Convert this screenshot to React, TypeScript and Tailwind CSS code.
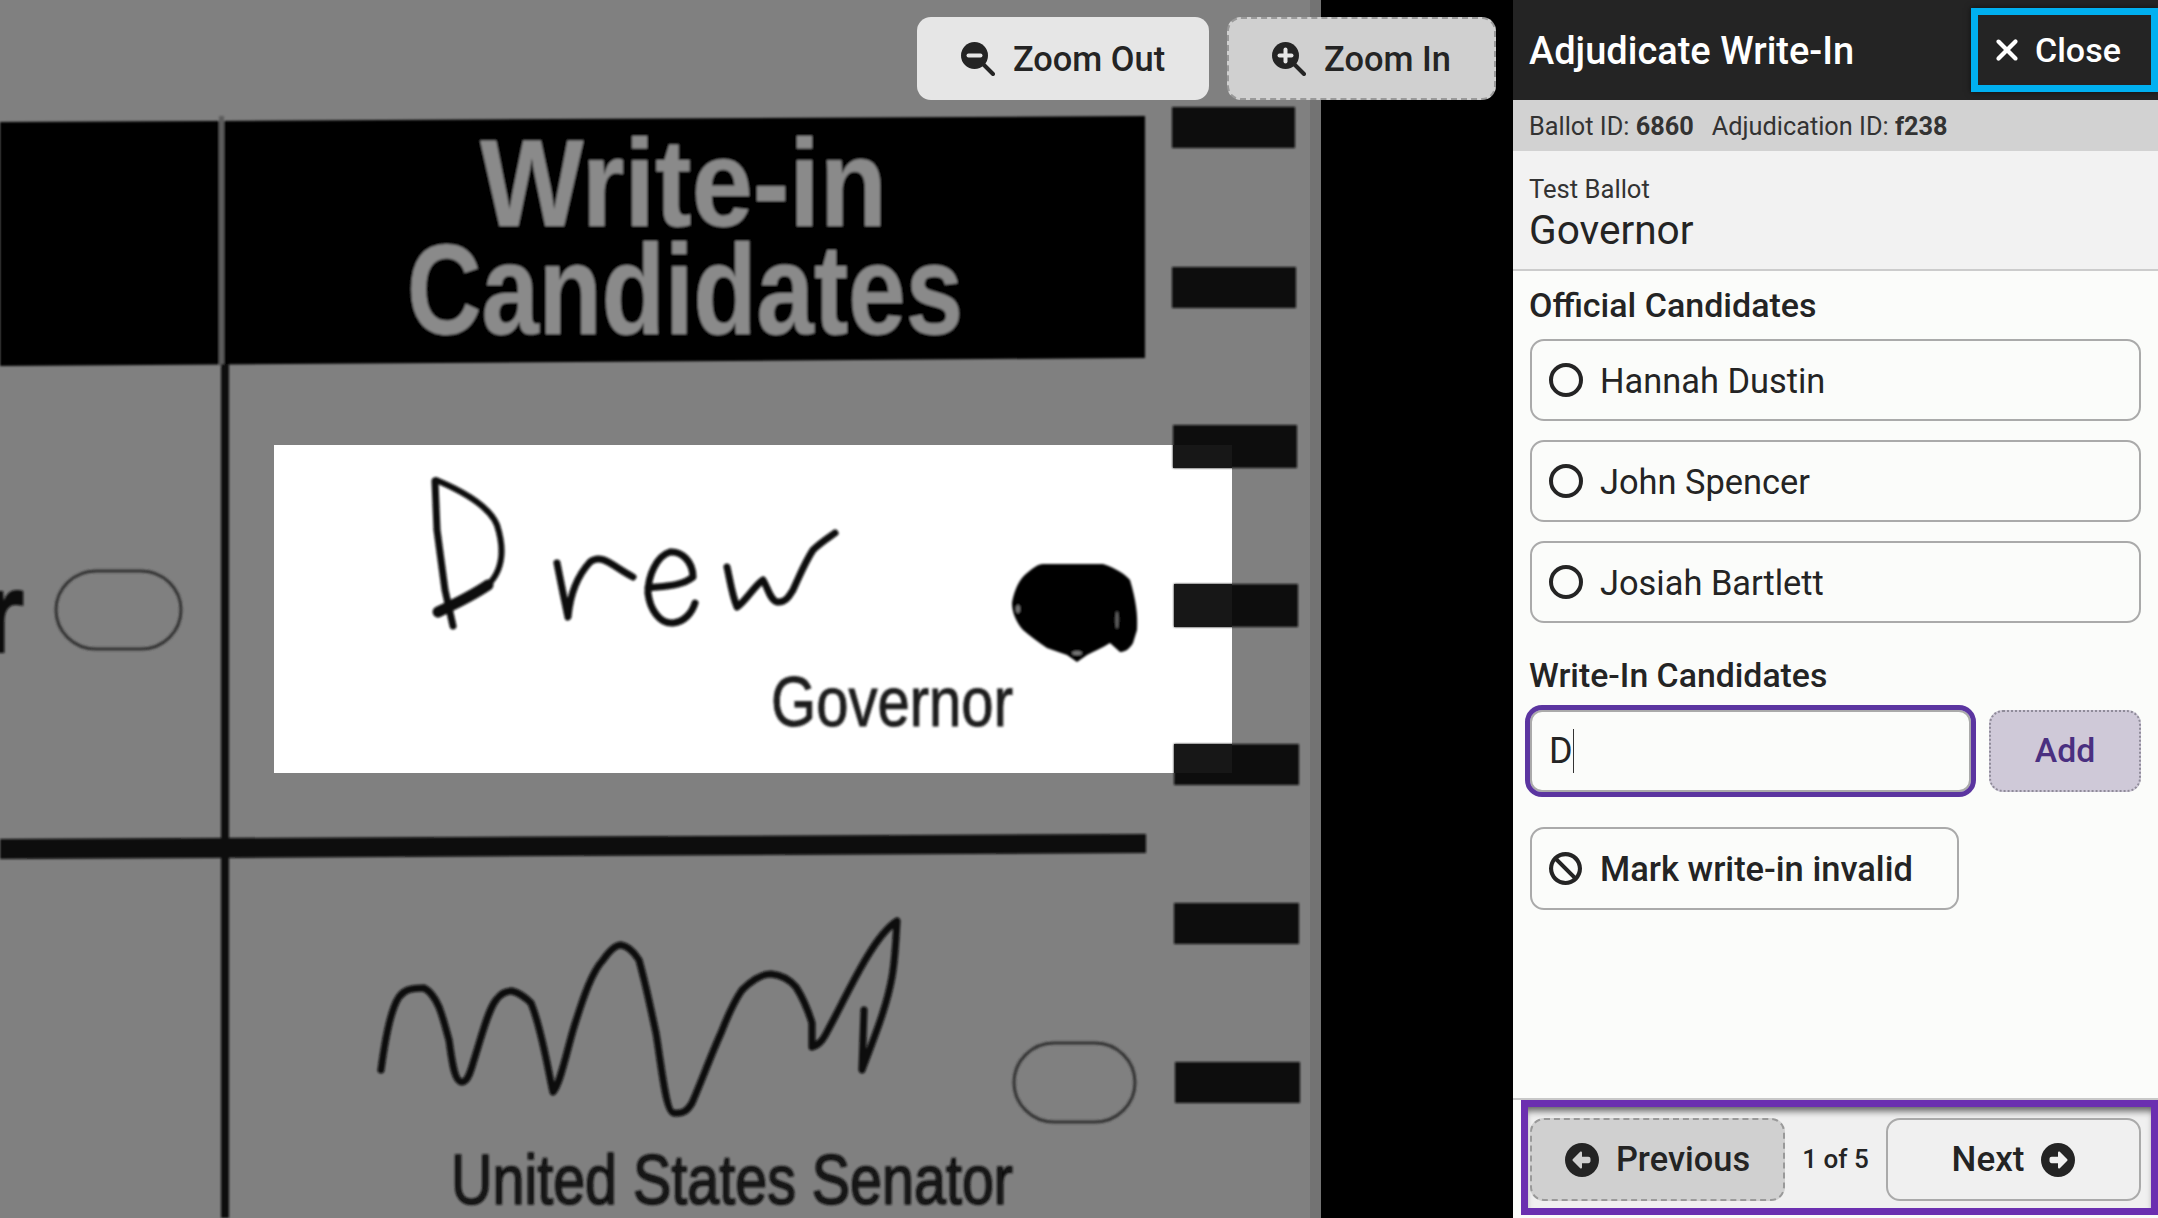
import React from 'react';
import { FaBan, FaCircleLeft, FaCircleRight, FaXmark } from 'react-icons/fa6';

const candidates = ['Hannah Dustin', 'John Spencer', 'Josiah Bartlett'];

const timingMarks = [
  { x: 1172, y: 107, w: 123, h: 41 },
  { x: 1172, y: 267, w: 124, h: 41 },
  { x: 1173, y: 425, w: 124, h: 43 },
  { x: 1174, y: 584, w: 124, h: 43 },
  { x: 1174, y: 744, w: 125, h: 41 },
  { x: 1174, y: 903, w: 125, h: 41 },
  { x: 1175, y: 1062, w: 125, h: 41 },
];

const ZoomIcon: React.FC<{ plus?: boolean }> = ({ plus }) => (
  <svg width="34" height="34" viewBox="0 0 34 34" className="shrink-0">
    <circle cx="13.5" cy="13.5" r="13.5" fill="#242424" />
    <path d="M22 22 L32 32" stroke="#242424" strokeWidth="4" strokeLinecap="round" />
    <path d="M7.5 13.5 H19.5" stroke="#e6e6e6" strokeWidth="4" strokeLinecap="round" />
    {plus && <path d="M13.5 7.5 V19.5" stroke="#e6e6e6" strokeWidth="4" strokeLinecap="round" />}
  </svg>
);

// the scanned ballot behind the toolbar, dimmed except for the write-in area
const BallotScan: React.FC = () => (
  <svg viewBox="0 0 1321 1218" className="block h-full w-full">
    <defs>
      <filter id="scan" filterUnits="userSpaceOnUse" x="-20" y="0" width="1361" height="1218">
        <feGaussianBlur stdDeviation="1.1" />
      </filter>
    </defs>
    <rect x="0" y="0" width="1321" height="1218" fill="#808080" />
    <rect x="1310" y="0" width="11" height="1218" fill="#737373" />

    <g filter="url(#scan)">
      <path d="M0 122 L1145 116 L1145 358 L0 366 Z" fill="#050505" />
      <rect x="219" y="116" width="5" height="250" fill="#5c5c5c" />
      <rect x="221" y="364" width="8" height="854" fill="#080808" />
      <path d="M0 839 L1146 834 L1146 853 L0 859 Z" fill="#080808" />

      <text x="480" y="226" fontFamily="'Liberation Sans', sans-serif" fontWeight="700" fontSize="124" fill="#8a8a8a" textLength="407" lengthAdjust="spacingAndGlyphs">Write-in</text>
      <text x="407" y="334" fontFamily="'Liberation Sans', sans-serif" fontWeight="700" fontSize="128" fill="#8a8a8a" textLength="556" lengthAdjust="spacingAndGlyphs">Candidates</text>

      <text x="-20" y="652" fontFamily="'Liberation Sans', sans-serif" fontWeight="700" fontSize="113" fill="#111111" stroke="#111111" strokeWidth="2">r</text>
      <rect x="56" y="571" width="125" height="78" rx="40" fill="none" stroke="#333333" strokeWidth="3" />
      <rect x="1014" y="1043" width="121" height="79" rx="40" fill="none" stroke="#333333" strokeWidth="3" />
    </g>

    <rect x="274" y="445" width="958" height="328" fill="#ffffff" />

    <g filter="url(#scan)">
      {timingMarks.map(m => (
        <rect key={m.y} x={m.x} y={m.y} width={m.w} height={m.h} fill="#080808" />
      ))}

      {/* handwritten name */}
      <g fill="none" stroke="#0c0c0c" strokeLinecap="round" strokeLinejoin="round">
        <path d="M435 481 L437 530 L445 590 L453 626" strokeWidth="7" />
        <path d="M436 480 C455 488 488 503 497 525 C505 550 503 570 488 585" strokeWidth="6" />
        <path d="M438 612 C455 604 472 596 488 585" strokeWidth="11" />
        <path d="M557 563 L563 593 L568 617 C570 595 578 575 590 562 C602 553 612 566 633 577" strokeWidth="7" />
        <path d="M648 588 C665 586 682 586 693 577 C693 562 682 551 670 552 C657 556 648 575 648 593 C650 610 660 624 673 623 C684 622 692 613 695 603" strokeWidth="7" />
        <path d="M727 567 C730 580 732 595 737 607 C745 602 755 585 763 580 C768 588 770 600 777 602 C786 603 790 595 793 590 C800 575 805 562 813 550 C820 543 828 538 835 533" strokeWidth="7" />
      </g>
      <path d="M1012 603 C1014 590 1020 578 1027 573 C1033 568 1038 564 1043 564 L1103 564 C1115 568 1125 574 1130 580 C1136 600 1138 615 1137 630 L1133 643 C1129 650 1124 652 1120 652 L1110 643 C1102 648 1094 651 1087 655 L1077 662 L1067 655 L1047 648 C1038 642 1030 636 1023 630 C1016 622 1012 612 1012 603 Z" fill="#060606" />
      <ellipse cx="1018" cy="609" rx="2" ry="4" fill="#777777" />
      <ellipse cx="1077" cy="653" rx="5" ry="2" fill="#777777" />
      <ellipse cx="1117" cy="620" rx="1.5" ry="9" fill="#666666" />
      <text x="771" y="726" fontFamily="'Liberation Sans', sans-serif" fontSize="71" fill="#1c1c1c" stroke="#1c1c1c" strokeWidth="1" textLength="242" lengthAdjust="spacingAndGlyphs">Governor</text>

      {/* scribble in the senator contest */}
      <path
        d="M381 1070 C385 1040 390 1010 399 997 C404 990 410 988 424 988 C432 992 436 1000 439 1007 C444 1020 446 1030 449 1040 C452 1060 454 1082 462 1082 C468 1082 471 1070 474 1060 C482 1035 488 1010 496 1000 C501 993 506 991 512 991 C520 993 526 998 531 1003 C542 1030 548 1070 553 1092 C560 1085 567 1050 574 1027 C584 995 592 972 603 960 C610 950 616 945 621 945 C628 946 634 952 639 960 C646 985 651 1010 656 1033 C662 1070 666 1113 674 1113 C684 1114 688 1110 692 1103 C702 1080 711 1055 721 1033 C728 1015 735 1000 742 990 C752 980 762 974 771 974 C782 975 790 980 796 987 C803 998 808 1010 812 1023 L812 1047 C820 1045 824 1038 828 1030 C840 1008 853 980 867 957 C876 942 886 928 897 921 C896 940 895 960 892 977 C886 1010 873 1040 862 1070 L864 1010"
        fill="none"
        stroke="#0c0c0c"
        strokeWidth="7"
        strokeLinecap="round"
        strokeLinejoin="round"
      />
      <text x="451" y="1204" fontFamily="'Liberation Sans', sans-serif" fontSize="70" fill="#121212" stroke="#121212" strokeWidth="1.5" textLength="562" lengthAdjust="spacingAndGlyphs">United States Senator</text>
    </g>

    {/* marks seen through the highlighted crop */}
    <rect x="1173" y="445" width="59" height="23" fill="#171717" />
    <rect x="1174" y="584" width="58" height="43" fill="#171717" />
    <rect x="1174" y="744" width="58" height="29" fill="#171717" />
  </svg>
);

const App: React.FC = () => {
  return (
    <div className="flex h-screen w-screen overflow-hidden bg-black font-['Roboto',sans-serif] text-[#242424]">
      <main className="relative w-[1513px] shrink-0">
        <div className="h-full w-[1321px]">
          <BallotScan />
        </div>
        <div className="absolute right-[17px] top-[17px] flex gap-[18px]">
          <button className="flex h-[83px] w-[292px] items-center justify-center gap-[18px] rounded-[14px] bg-[#e6e6e6] text-[34.4px] font-medium">
            <ZoomIcon /> <span className="pt-[3px]">Zoom Out</span>
          </button>
          <button className="flex h-[83px] w-[269px] items-center justify-center gap-[18px] rounded-[14px] border-2 border-dashed border-[#999999] bg-[#d0d0d0] text-[34.4px] font-medium">
            <ZoomIcon plus /> <span className="pt-[3px]">Zoom In</span>
          </button>
        </div>
      </main>

      <aside className="flex h-full w-[645px] shrink-0 flex-col bg-[#fbfcfa]">
        <header className="flex h-[100px] shrink-0 items-center justify-between bg-[#242424] pl-[16px] text-white">
          <h1 className="pt-[2px] text-[38px] font-medium">Adjudicate Write-In</h1>
          <button className="flex h-[84px] w-[187px] items-center gap-[11px] border-[7px] border-[#00b0f0] pl-[12px] text-[34px] font-medium shadow-[0_0_6px_rgba(0,0,0,0.6)]">
            <FaXmark size={34} /> <span className="pt-[1px]">Close</span>
          </button>
        </header>

        <div className="flex h-[51px] shrink-0 items-center gap-[18px] bg-[#d2d2d2] pl-[16px] pt-[2px] text-[25.3px] text-[#333333]">
          <span>Ballot ID: <b className="font-bold">6860</b></span>
          <span>Adjudication ID: <b className="font-bold">f238</b></span>
        </div>

        <div className="flex h-[120px] shrink-0 flex-col justify-center border-b-2 border-[#cccccc] bg-[#f2f2f2] pl-[16px] pt-[8px]">
          <div className="text-[25.6px] leading-[32px] text-[#333333]">Test Ballot</div>
          <div className="text-[40.6px] leading-[50px]">Governor</div>
        </div>

        <div className="flex flex-1 flex-col px-[17px] pt-[14px]">
          <h2 className="mb-[14px] -ml-px text-[34px] font-medium leading-[40px]">Official Candidates</h2>
          <div className="flex flex-col gap-[19px]">
            {candidates.map(name => (
              <button key={name} className="flex h-[82px] items-center gap-[17px] rounded-[14px] border-2 border-[#aaaaaa] pl-[17px] text-[34.4px]">
                <span className="h-[34px] w-[34px] shrink-0 rounded-full border-[4px] border-[#242424]" />
                <span className="pt-[3px]">{name}</span>
              </button>
            ))}
          </div>

          <h2 className="mb-[14px] mt-[33px] -ml-px text-[33.8px] font-medium leading-[40px]">Write-In Candidates</h2>
          <div className="flex items-center gap-[18px]">
            <div className="flex h-[82px] w-[441px] items-center rounded-[12px] border-2 border-[#aaaaaa] pl-[17px] text-[36px] outline-[5px] outline-[#5b35a0]">
              D<span className="inline-block h-[44px] w-px bg-[#333333]" />
            </div>
            <button className="h-[82px] flex-1 rounded-[14px] border-2 border-dotted border-[#8f8b99] bg-[#cfc9d8] text-[33.8px] font-medium text-[#4a2f80]">Add</button>
          </div>

          <button className="mt-[35px] flex h-[83px] w-[429px] items-center gap-[18px] rounded-[14px] border-2 border-[#aaaaaa] pl-[17px] text-[34.5px] font-medium">
            <FaBan size={33} className="shrink-0" /> <span className="pt-[2px]">Mark write-in invalid</span>
          </button>
        </div>

        <footer className="h-[120px] shrink-0 border-t-2 border-[#c8c8c8] pb-[3px] pl-[8px]">
          <div className="flex h-full items-center border-[7px] border-[#6b2fb0] bg-[#f0f0f0] pl-[2px] pr-[10px] pt-[4px] shadow-[inset_0_7px_7px_-3px_rgba(0,0,0,0.6)]">
            <button className="flex h-[83px] w-[255px] items-center justify-center gap-[17px] rounded-[14px] border-2 border-dashed border-[#999999] bg-[#d0d0d0] text-[34.4px] font-medium">
              <FaCircleLeft size={34} /> <span className="pt-[1px]">Previous</span>
            </button>
            <span className="flex-1 text-center text-[26px] font-medium">1 of 5</span>
            <button className="flex h-[83px] w-[255px] items-center justify-center gap-[17px] rounded-[14px] border-2 border-[#aaaaaa] text-[35px] font-medium">
              <span className="pt-[2px]">Next</span> <FaCircleRight size={34} />
            </button>
          </div>
        </footer>
      </aside>
    </div>
  );
};

export default App;
